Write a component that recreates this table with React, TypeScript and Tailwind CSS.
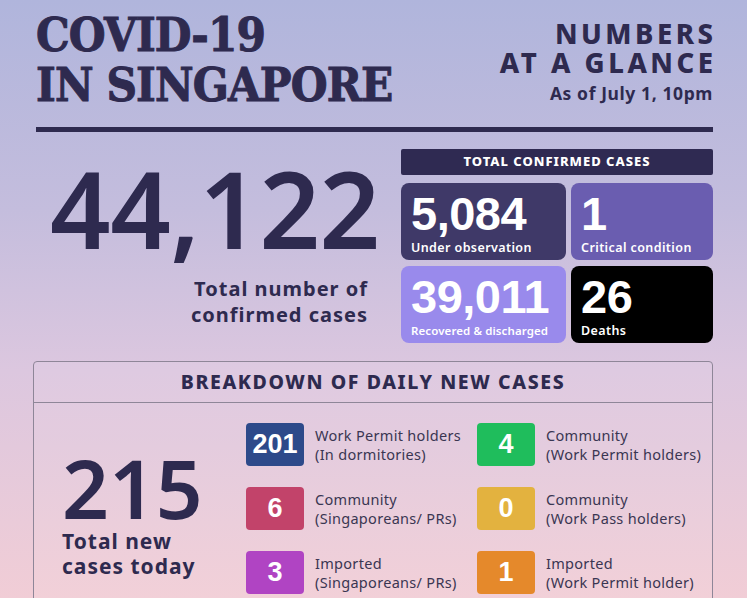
import React from "react";

const body = { fontFamily: '"Noto Sans", Lato, sans-serif' };
const arial = { fontFamily: '"Liberation Sans", Arial, sans-serif' };
const slab = { fontFamily: '"DejaVu Serif", "Liberation Serif", serif' };

function Card({ n, label, cls, small }: { n: string; label: string; cls: string; small?: boolean }) {
  return (
    <div className={`rounded-[8px] pl-[10px] pt-[6px] text-white ${cls}`}>
      <div className="text-[47px] font-bold leading-[50px] tracking-[-0.5px]" style={arial}>
        {n}
      </div>
      <div
        className={`mt-[1px] font-semibold leading-[16px] ${small ? "text-[11.5px] tracking-[0.1px]" : "text-[12.5px] tracking-[0.4px]"}`}
        style={body}
      >
        {label}
      </div>
    </div>
  );
}

function Item({ n, l1, l2, cls }: { n: string; l1: string; l2: string; cls: string }) {
  return (
    <div className="flex items-center">
      <div
        className={`flex h-[43px] w-[58px] items-center justify-center rounded-[4px] text-[27px] font-bold text-white ${cls}`}
        style={arial}
      >
        {n}
      </div>
      <div className="ml-[11px] text-[14.5px] leading-[19px] tracking-[0.3px] text-[#3a3652]" style={body}>
        <div>{l1}</div>
        <div>{l2}</div>
      </div>
    </div>
  );
}

export default function App() {
  return (
    <div
      className="relative h-[598px] w-[747px] overflow-hidden bg-[linear-gradient(180deg,#b0b5dc_0%,#c4bddd_35%,#dcc7df_62%,#f1cdd6_100%)] text-[#2e2a4f]"
      style={body}
    >
      <div className="pl-[36px] pr-[34px]">
        {/* Header */}
        <div className="flex justify-between pt-[10px]">
          <div
            className="origin-left text-[46px] font-bold leading-[50px] tracking-[-1px] [-webkit-text-stroke:1px_#2e2a4f] [transform:scaleX(0.92)]"
            style={slab}
          >
            <div>COVID-19</div>
            <div>IN SINGAPORE</div>
          </div>
          <div className="pt-[9px] text-right">
            <div className="-mr-[3.5px] text-[27.5px] font-extrabold leading-[29px] tracking-[3.5px]">NUMBERS</div>
            <div className="-mr-[3.5px] text-[27.5px] font-extrabold leading-[29px] tracking-[3.5px]">AT A GLANCE</div>
            <div className="mt-[6px] text-[17.5px] font-bold leading-[20px] tracking-[0.6px]">As of July 1, 10pm</div>
          </div>
        </div>

        <div className="mt-[17px] h-[5px] w-full bg-[#2e2a4f]" />

        {/* Totals */}
        <div className="mt-[17px] flex">
          <div className="w-[365px]">
            <div className="mt-[11px] pl-[14px] text-[106px] font-semibold leading-[96px] tracking-[-0.5px]">44,122</div>
            <div className="mt-[20px] pr-[33px] text-right text-[20px] font-bold leading-[26px] tracking-[1px]">
              <div>Total number of</div>
              <div>confirmed cases</div>
            </div>
          </div>
          <div className="w-[312px]">
            <div className="flex h-[26px] items-center justify-center rounded-[2px] bg-[#2f2a52] text-[13px] font-extrabold tracking-[1px] text-white">
              TOTAL CONFIRMED CASES
            </div>
            <div className="mt-[8px] grid grid-cols-[165px_142px] grid-rows-[77px_77px] gap-x-[5px] gap-y-[6px]">
              <Card n="5,084" label="Under observation" cls="bg-[#3f3968]" />
              <Card n="1" label="Critical condition" cls="bg-[#6a5db0]" />
              <Card n="39,011" label="Recovered & discharged" cls="bg-[#998aec]" small />
              <Card n="26" label="Deaths" cls="bg-black" />
            </div>
          </div>
        </div>
      </div>

      {/* Breakdown */}
      <div className="ml-[33px] mt-[18px] h-[300px] w-[680px] rounded-[4px] border border-[#8e8698] bg-white/5">
        <div className="flex h-[41px] items-center justify-center border-b border-[#8e8698] text-[19.5px] font-extrabold tracking-[1.6px]">
          BREAKDOWN OF DAILY NEW CASES
        </div>
        <div className="flex">
          <div className="w-[212px] pl-[28px] pt-[49px]">
            <div className="text-[82px] font-semibold leading-[70px] tracking-[0px]">215</div>
            <div className="mt-[7px] text-[21px] font-bold leading-[25px] tracking-[1px]">
              <div>Total new</div>
              <div>cases today</div>
            </div>
          </div>
          <div className="grid grid-cols-[231px_230px] grid-rows-[43px_43px_43px] gap-y-[21px] pt-[20px]">
            <Item n="201" l1="Work Permit holders" l2="(In dormitories)" cls="bg-[#2d4a8a]" />
            <Item n="4" l1="Community" l2="(Work Permit holders)" cls="bg-[#1fbd5c]" />
            <Item n="6" l1="Community" l2="(Singaporeans/ PRs)" cls="bg-[#c2436a]" />
            <Item n="0" l1="Community" l2="(Work Pass holders)" cls="bg-[#e3b23f]" />
            <Item n="3" l1="Imported" l2="(Singaporeans/ PRs)" cls="bg-[#b044c3]" />
            <Item n="1" l1="Imported" l2="(Work Permit holder)" cls="bg-[#e5892b]" />
          </div>
        </div>
      </div>
    </div>
  );
}
